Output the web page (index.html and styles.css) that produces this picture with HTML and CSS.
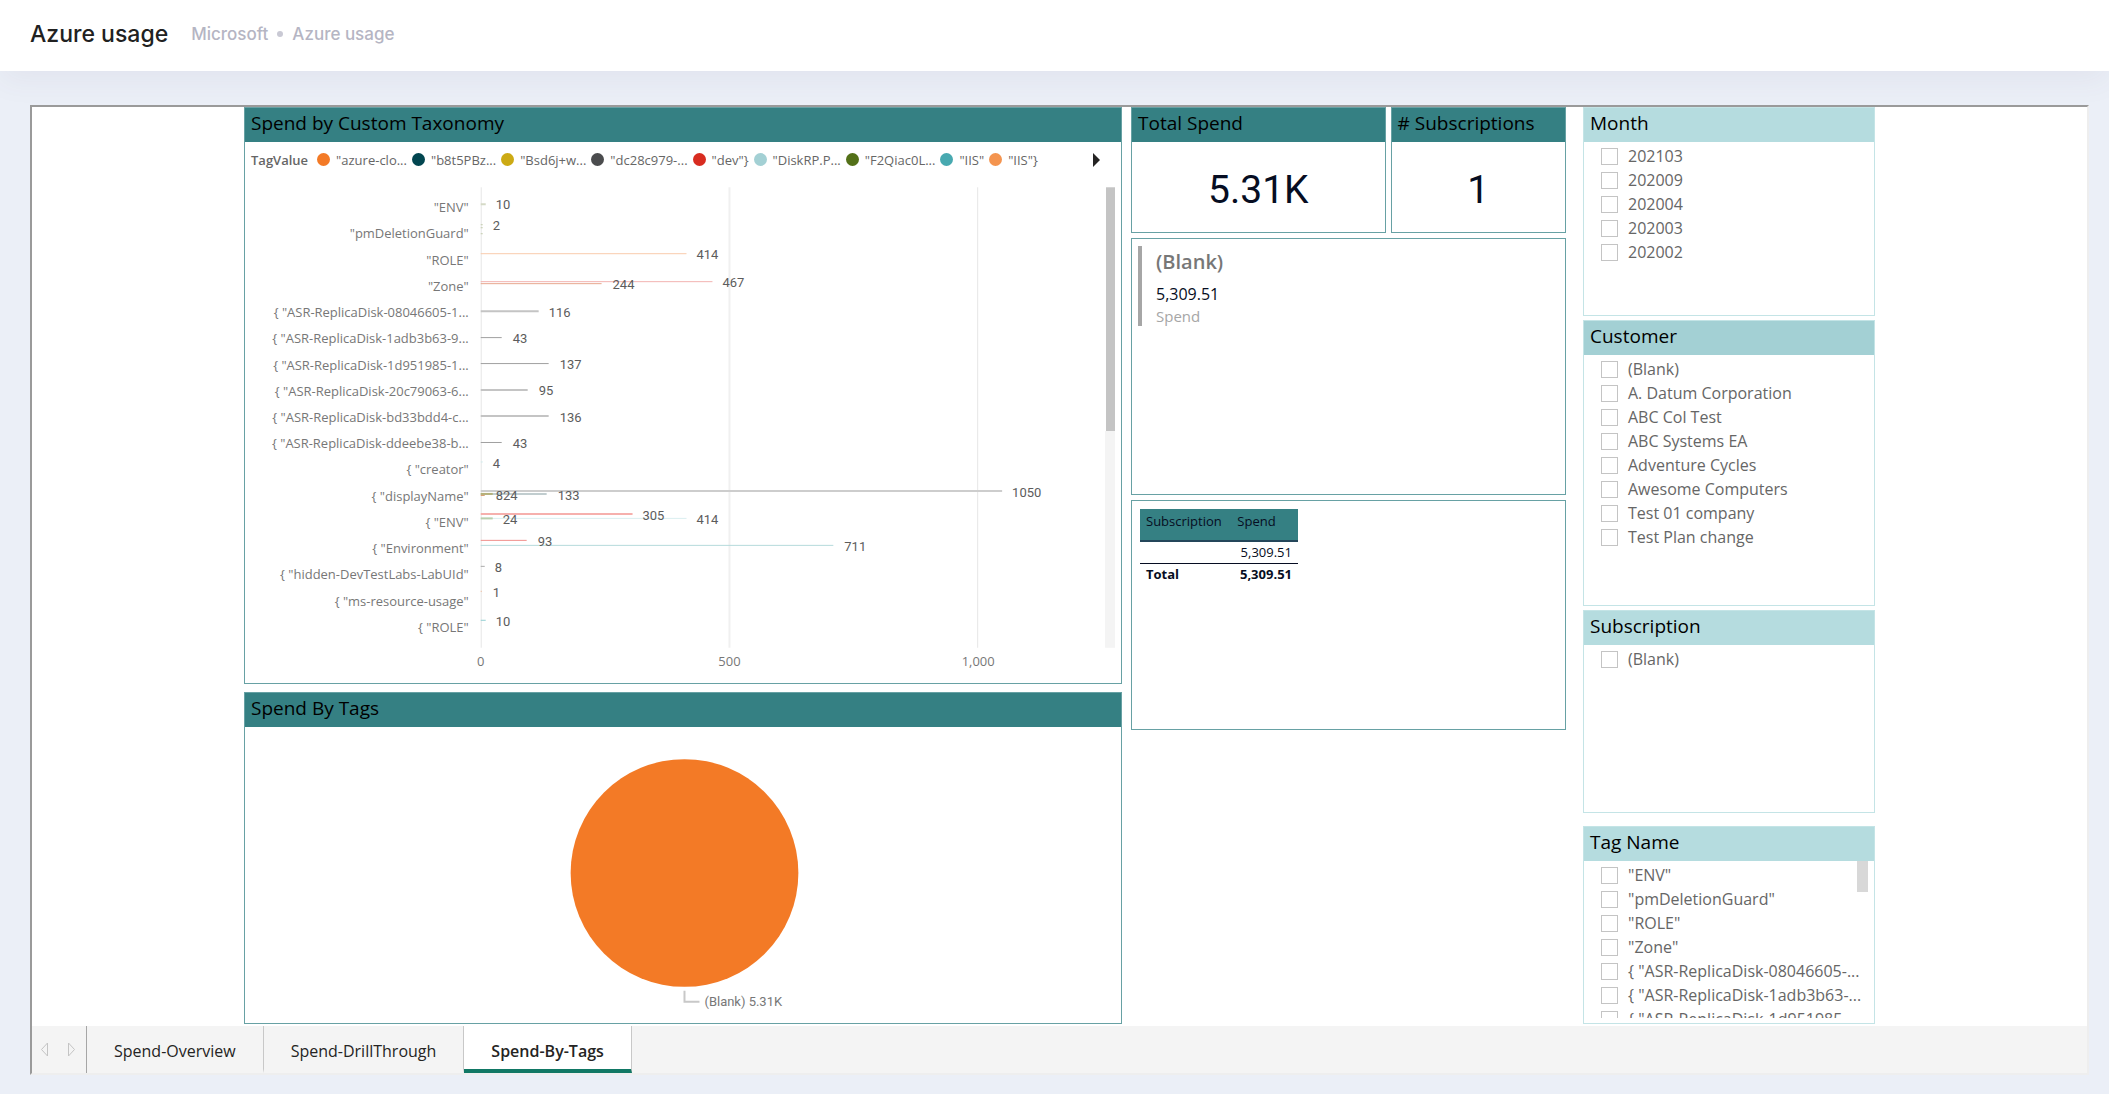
FILE: index.html
```html
<!DOCTYPE html>
<html lang="en">
<head>
<meta charset="utf-8">
<title>Azure usage</title>
<link rel="stylesheet" href="styles.css">
</head>
<body>
<header class="topbar">
  <h1 class="topbar-title">Azure usage</h1>
  <nav class="crumbs" aria-label="Breadcrumb">
    <a href="#">Microsoft</a>
    <span class="crumb-dot"></span>
    <a href="#">Azure usage</a>
  </nav>
</header>
<main class="page">
  <div class="frame">
    <div class="report">
      <div class="col col-charts">
        <section class="panel">
          <h2 class="panel-title">Spend by Custom Taxonomy</h2>
          <div class="legend">
            <span class="legend-name">TagValue</span>
            <ul class="legend-items">
              <li><i class="dot orange"></i>"azure-clo...</li>
              <li><i class="dot navy"></i>"b8t5PBz...</li>
              <li><i class="dot gold"></i>"Bsd6j+w...</li>
              <li><i class="dot slate"></i>"dc28c979-...</li>
              <li><i class="dot red"></i>"dev"}</li>
              <li><i class="dot sky"></i>"DiskRP.P...</li>
              <li><i class="dot green"></i>"F2Qiac0L...</li>
              <li><i class="dot teal"></i>"IIS"</li>
              <li><i class="dot peach"></i>"IIS"}</li>
            </ul>
            <button class="legend-next" type="button" aria-label="Next legend items"><svg width="8" height="14" viewBox="0 0 8 14"><path d="M0 0L7 7L0 14Z" fill="#252423"/></svg></button>
          </div>
          <svg class="chart" viewBox="245 177 877 506" role="img" aria-label="Spend by tag">
            <g class="grid">
              <path d="M481.5 187V648M978.5 187V648" stroke="#e6e6e6"/>
              <path d="M730 187V648" stroke="#f0f0f0" stroke-width="2"/>
            </g>
            <g class="axis" text-anchor="end">
              <text x="469" y="212">"ENV"</text>
              <text x="469" y="238">"pmDeletionGuard"</text>
              <text x="469" y="265">"ROLE"</text>
              <text x="469" y="291">"Zone"</text>
              <text x="469" y="317">{ "ASR-ReplicaDisk-08046605-1...</text>
              <text x="469" y="343">{ "ASR-ReplicaDisk-1adb3b63-9...</text>
              <text x="469" y="370">{ "ASR-ReplicaDisk-1d951985-1...</text>
              <text x="469" y="396">{ "ASR-ReplicaDisk-20c79063-6...</text>
              <text x="469" y="422">{ "ASR-ReplicaDisk-bd33bdd4-c...</text>
              <text x="469" y="448">{ "ASR-ReplicaDisk-ddeebe38-b...</text>
              <text x="469" y="474">{ "creator"</text>
              <text x="469" y="501">{ "displayName"</text>
              <text x="469" y="527">{ "ENV"</text>
              <text x="469" y="553">{ "Environment"</text>
              <text x="469" y="579">{ "hidden-DevTestLabs-LabUId"</text>
              <text x="469" y="606">{ "ms-resource-usage"</text>
              <text x="469" y="632">{ "ROLE"</text>
            </g>
            <g class="axis" text-anchor="middle">
              <text x="481" y="666">0</text>
              <text x="730" y="666">500</text>
              <text x="979" y="666">1,000</text>
            </g>
            <g fill="none">
              <path d="M481 204H486" stroke="#d5dac6" stroke-width="2"/>
              <path d="M481 224.500H483M481 227.500H483M481 233.500H483" stroke="#c3ccae"/>
              <path d="M481 253.500H687" stroke="#f9ccad"/>
              <path d="M481 281.500H713" stroke="#f2b3b1"/>
              <path d="M481 283.500H602" stroke="#e8a78f"/>
              <path d="M481 311H539M481 390H528M481 416H549" stroke="#c4c4c4" stroke-width="2"/>
              <path d="M481 337.500H502M481 363.500H549M481 442.500H502" stroke="#a0a0a0"/>
              <path d="M481 462H483" stroke="#d0eaec"/>
              <path d="M481 491H1003" stroke="#cdcdcd" stroke-width="2"/>
              <path d="M481 494H547" stroke="#c1cdcf" stroke-width="2"/>
              <path d="M481 494H493" stroke="#b4b17a" stroke-width="2"/>
              <path d="M481 495.500H485" stroke="#d79a6c"/>
              <path d="M481 514H633" stroke="#f6b0ad" stroke-width="2"/>
              <path d="M481 518.500H687" stroke="#daeef0"/>
              <path d="M481 518.500H493" stroke="#b9cfae" stroke-width="2"/>
              <path d="M481 540.500H527" stroke="#f08f8b"/>
              <path d="M481 545.500H834" stroke="#b5dadb"/>
              <path d="M481 566.500H485" stroke="#aaa"/>
              <path d="M481 591.500H482" stroke="#f0b490"/>
              <path d="M481 620.500H486" stroke="#93cfd3"/>
            </g>
            <g class="value">
              <text x="496" y="209">10</text>
              <text x="493" y="230">2</text>
              <text x="697" y="259">414</text>
              <text x="723" y="287">467</text>
              <text x="613" y="289">244</text>
              <text x="549" y="317">116</text>
              <text x="513" y="343">43</text>
              <text x="560" y="369">137</text>
              <text x="539" y="395">95</text>
              <text x="560" y="422">136</text>
              <text x="513" y="448">43</text>
              <text x="493" y="468">4</text>
              <text x="1013" y="497">1050</text>
              <text x="558" y="500">133</text>
              <text x="496" y="500">824</text>
              <text x="643" y="520">305</text>
              <text x="697" y="524">414</text>
              <text x="503" y="524">24</text>
              <text x="538" y="546">93</text>
              <text x="845" y="551">711</text>
              <text x="495" y="572">8</text>
              <text x="493" y="597">1</text>
              <text x="496" y="626">10</text>
            </g>
            <rect x="1106" y="431" width="10" height="217" fill="#f4f4f4"/>
            <rect x="1107" y="187" width="9" height="244" fill="#c4c4c4"/>
          </svg>
        </section>
        <section class="panel">
          <h2 class="panel-title">Spend By Tags</h2>
          <svg class="chart" viewBox="245 727 877 296" role="img" aria-label="Spend by tags pie">
            <circle cx="685" cy="873" r="114" fill="#f37a26"/>
            <path d="M685 991V1002H700" fill="none" stroke="#c8c8c8" stroke-width="2"/>
            <text class="pie-label" x="705" y="1006">(Blank) 5.31K</text>
          </svg>
        </section>
      </div>

      <div class="col col-facts">
        <div class="kpis">
          <section class="panel">
            <h2 class="panel-title">Total Spend</h2>
            <p class="kpi">5.31K</p>
          </section>
          <section class="panel">
            <h2 class="panel-title"># Subscriptions</h2>
            <p class="kpi">1</p>
          </section>
        </div>
        <section class="panel card-panel">
          <div class="card">
            <h3>(Blank)</h3>
            <p class="card-value">5,309.51</p>
            <p class="card-label">Spend</p>
          </div>
        </section>
        <section class="panel table-panel">
          <table class="spend-table">
            <thead><tr><th>Subscription</th><th>Spend</th></tr></thead>
            <tbody><tr><td></td><td>5,309.51</td></tr></tbody>
            <tfoot><tr><td>Total</td><td>5,309.51</td></tr></tfoot>
          </table>
        </section>
      </div>

      <div class="col col-slicers">
        <section class="panel slicer">
          <h2 class="panel-title">Month</h2>
          <div class="options">
            <label><input type="checkbox">202103</label>
            <label><input type="checkbox">202009</label>
            <label><input type="checkbox">202004</label>
            <label><input type="checkbox">202003</label>
            <label><input type="checkbox">202002</label>
          </div>
        </section>
        <section class="panel slicer customer">
          <h2 class="panel-title">Customer</h2>
          <div class="options">
            <label><input type="checkbox">(Blank)</label>
            <label><input type="checkbox">A. Datum Corporation</label>
            <label><input type="checkbox">ABC Col Test</label>
            <label><input type="checkbox">ABC Systems EA</label>
            <label><input type="checkbox">Adventure Cycles</label>
            <label><input type="checkbox">Awesome Computers</label>
            <label><input type="checkbox">Test 01 company</label>
            <label><input type="checkbox">Test Plan change</label>
          </div>
        </section>
        <section class="panel slicer">
          <h2 class="panel-title">Subscription</h2>
          <div class="options">
            <label><input type="checkbox">(Blank)</label>
          </div>
        </section>
        <section class="panel slicer tag-names">
          <h2 class="panel-title">Tag Name</h2>
          <div class="options">
            <label><input type="checkbox">"ENV"</label>
            <label><input type="checkbox">"pmDeletionGuard"</label>
            <label><input type="checkbox">"ROLE"</label>
            <label><input type="checkbox">"Zone"</label>
            <label><input type="checkbox">{ "ASR-ReplicaDisk-08046605-...</label>
            <label><input type="checkbox">{ "ASR-ReplicaDisk-1adb3b63-...</label>
            <label><input type="checkbox">{ "ASR-ReplicaDisk-1d951985-...</label>
            <span class="thumb"></span>
          </div>
        </section>
      </div>
    </div>
    <nav class="tabs" aria-label="Report pages">
      <div class="tab-arrows">
        <button type="button" aria-label="Previous page"><svg width="9" height="15" viewBox="0 0 9 15"><path d="M7.500 1V14L1.500 7.500Z" fill="none" stroke="#c4c4c4"/></svg></button>
        <button type="button" aria-label="Next page"><svg width="9" height="15" viewBox="0 0 9 15"><path d="M1.500 1V14L7.500 7.500Z" fill="none" stroke="#c4c4c4"/></svg></button>
      </div>
      <button class="tab" type="button">Spend-Overview</button>
      <button class="tab" type="button">Spend-DrillThrough</button>
      <button class="tab active" type="button">Spend-By-Tags</button>
    </nav>
  </div>
</main>
</body>
</html>
```
FILE: styles.css
```css
* { box-sizing: border-box; }

body {
  margin: 0;
  height: 100vh;
  min-height: 720px;
  display: flex;
  flex-direction: column;
  background: #ebeff7;
  font-family: "Open Sans", "Noto Sans", sans-serif;
  color: #000;
}

h1, h2, h3, p, ul { margin: 0; padding: 0; font-weight: 400; }
button { border: 0; background: none; padding: 0; font: inherit; }

/* Top bar */
.topbar {
  position: relative;
  z-index: 1;
  flex: none;
  display: flex;
  align-items: center;
  gap: 23px;
  height: 71px;
  padding: 0 30px 4px;
  background: #fff;
  box-shadow: 0 10px 30px rgba(82, 63, 105, 0.06);
  font-family: Inter, sans-serif;
}
.topbar-title { font-size: 23px; font-weight: 500; color: #212121; }
.crumbs { display: flex; align-items: center; gap: 9px; font-size: 17px; font-weight: 500; }
.crumbs a { color: #b5b5c3; text-decoration: none; }
.crumb-dot { width: 6px; height: 6px; border-radius: 50%; background: #c9c9d4; }

/* Report frame */
.page { flex: 1; min-height: 0; display: flex; padding: 34px 20px 19px 30px; }
.frame {
  flex: 1;
  min-width: 0;
  display: flex;
  flex-direction: column;
  border: 2px solid;
  border-color: #9a9a9a #eee #eee #9a9a9a;
  background: #fff;
}
.report {
  flex: 1;
  min-height: 0;
  width: 100%;
  max-width: 1631px;
  margin: 0 auto;
  padding-bottom: 2px;
  display: grid;
  grid-template-rows: minmax(0, 1fr);
  grid-template-columns: 878fr 435fr 300fr;
  column-gap: 9px;
}
.col { display: grid; min-width: 0; min-height: 0; }
.col-charts { grid-template-rows: 577fr 332fr; row-gap: 8px; }
.col-facts { grid-template-rows: 126fr 257fr 230fr 289fr; row-gap: 5px; }
.col-slicers { grid-template-rows: 209fr 286fr 203fr 207fr; row-gap: 4px; padding-left: 8px; }

.panel {
  display: flex;
  flex-direction: column;
  min-width: 0;
  min-height: 0;
  border: 1px solid #67a1a4;
  overflow: hidden;
}
.panel-title {
  flex: none;
  height: 34px;
  padding: 0 6px;
  background: #358083;
  font-size: 19px;
  line-height: 30px;
  white-space: nowrap;
}

/* Legend */
.legend {
  flex: none;
  display: flex;
  align-items: center;
  height: 35px;
  padding: 0 20px 0 6px;
  font-size: 13px;
  color: #666;
  white-space: nowrap;
}
.legend-name { font-weight: 600; margin-right: 9px; }
.legend-items { display: flex; gap: 5px; list-style: none; }
.legend-items li { display: flex; align-items: center; gap: 6px; }
.dot { width: 13px; height: 13px; border-radius: 50%; }
.orange { background: #f37a26; }
.navy { background: #024650; }
.gold { background: #ccaa14; }
.slate { background: #4b4c4e; }
.red { background: #d82c20; }
.sky { background: #a3d0d4; }
.green { background: #537018; }
.teal { background: #48a9b0; }
.peach { background: #f4944f; }
.legend-next { margin-left: auto; display: flex; }

/* Charts */
.chart { display: block; width: 100%; flex: 1 1 0; min-height: 0; }
.axis { font-size: 13px; fill: #777; }
.value { font: 13px Roboto, sans-serif; fill: #5c5c5c; }
.pie-label { font: 13px Roboto, sans-serif; fill: #777; }

/* Figures */
.kpis { display: grid; grid-template-columns: 254fr 175fr; column-gap: 5px; min-height: 0; }
.kpi {
  flex: 1;
  display: flex;
  align-items: center;
  justify-content: center;
  padding-top: 5px;
  font: 39px Roboto, sans-serif;
  color: #060d22;
}
.card-panel { padding: 7px 6px; }
.card { height: 80px; padding-left: 14px; border-left: 4px solid #a6a6a6; }
.card h3 { font-size: 20px; font-weight: 600; line-height: 32px; color: #777; }
.card-value { font-size: 16px; line-height: 28px; margin-top: 2px; color: #060d22; }
.card-label { font-size: 15px; line-height: 16px; color: #a6a6a6; }

.table-panel { padding: 8px; }
.spend-table { width: 158px; border-collapse: collapse; font-size: 13px; line-height: 18px; color: #060d22; }
.spend-table th { height: 32px; padding: 3px 6px 0; background: #358083; border-bottom: 2px solid #24465a; font-weight: 400; text-align: left; vertical-align: top; }
.spend-table td { height: 22px; padding: 0 6px; }
.spend-table td:last-child { text-align: right; }
.spend-table tfoot td { border-top: 1px solid #060d22; font-weight: 700; }

/* Slicers */
.slicer { border-color: #c4e4e6; }
.slicer .panel-title { background: #b5dcdf; }
.customer .panel-title { background: #a3d0d4; }
.tag-names { margin-top: 9px; padding-bottom: 5px; }
.options { position: relative; flex: 1; min-height: 0; overflow: hidden; padding: 2px 0 0 17px; }
.options label { display: flex; align-items: center; gap: 10px; height: 24px; font-size: 16px; color: #666; white-space: nowrap; }
.options input { appearance: none; flex: none; width: 17px; height: 17px; margin: 0; border: 1px solid #c4c4c4; background: #fff; }
.thumb { position: absolute; top: 0; right: 6px; width: 11px; height: 31px; background: #d8d8d8; }

/* Page tabs */
.tabs { flex: none; display: flex; height: 47px; background: #f4f4f4; }
.tab-arrows { display: flex; align-items: center; gap: 18px; width: 55px; padding-left: 8px; border-right: 1px solid #a6a6a6; }
.tab-arrows button { display: flex; }
.tab { padding: 6px 27px 0; border-right: 1px solid #c8c8c8; border-bottom: 4px solid transparent; font-size: 16px; color: #252423; }
.tab.active { background: #fff; border-bottom-color: #117865; font-weight: 600; }
```
